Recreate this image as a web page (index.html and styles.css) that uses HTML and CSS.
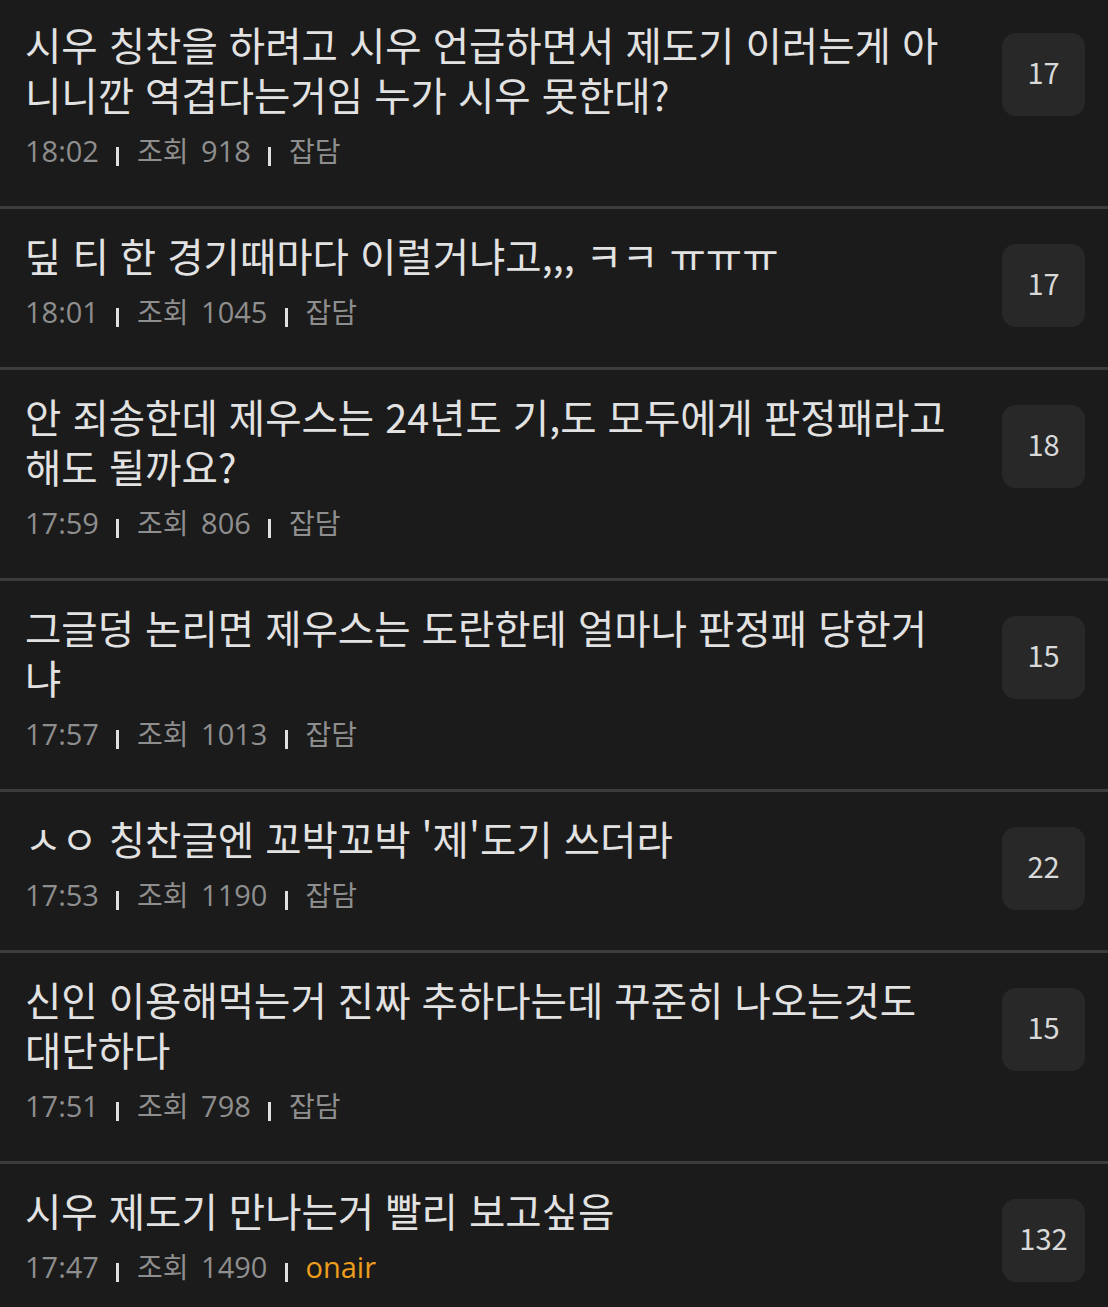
FILE: index.html
```html
<!DOCTYPE html>
<html lang="ko">
<head>
    <meta charset="UTF-8">
    <meta name="viewport" content="width=device-width, initial-scale=1.0">
    <title>잡담 게시판</title>
    <link rel="stylesheet" href="styles.css">
</head>
<body>
    <ul class="post-list">
        <li class="post">
            <div class="post-body">
                <h2 class="post-title">시우 칭찬을 하려고 시우 언급하면서 제도기 이러는게 아니니깐 역겹다는거임 누가 시우 못한대?</h2>
                <div class="post-meta">18:02 <span class="bar"></span> <span class="label">조회</span> 918 <span class="bar"></span> <span class="label">잡담</span></div>
            </div>
            <div class="reply-count">17</div>
        </li>
        <li class="post">
            <div class="post-body">
                <h2 class="post-title">딮 티 한 경기때마다 이럴거냐고,,, ㅋㅋ ㅠㅠㅠ</h2>
                <div class="post-meta">18:01 <span class="bar"></span> <span class="label">조회</span> 1045 <span class="bar"></span> <span class="label">잡담</span></div>
            </div>
            <div class="reply-count">17</div>
        </li>
        <li class="post">
            <div class="post-body">
                <h2 class="post-title">안 죄송한데 제우스는 24년도 기,도 모두에게 판정패라고 해도 될까요?</h2>
                <div class="post-meta">17:59 <span class="bar"></span> <span class="label">조회</span> 806 <span class="bar"></span> <span class="label">잡담</span></div>
            </div>
            <div class="reply-count">18</div>
        </li>
        <li class="post">
            <div class="post-body">
                <h2 class="post-title">그글덩 논리면 제우스는 도란한테 얼마나 판정패 당한거냐</h2>
                <div class="post-meta">17:57 <span class="bar"></span> <span class="label">조회</span> 1013 <span class="bar"></span> <span class="label">잡담</span></div>
            </div>
            <div class="reply-count">15</div>
        </li>
        <li class="post">
            <div class="post-body">
                <h2 class="post-title">ㅅㅇ 칭찬글엔 꼬박꼬박 '제'도기 쓰더라</h2>
                <div class="post-meta">17:53 <span class="bar"></span> <span class="label">조회</span> 1190 <span class="bar"></span> <span class="label">잡담</span></div>
            </div>
            <div class="reply-count">22</div>
        </li>
        <li class="post">
            <div class="post-body">
                <h2 class="post-title">신인 이용해먹는거 진짜 추하다는데 꾸준히 나오는것도 대단하다</h2>
                <div class="post-meta">17:51 <span class="bar"></span> <span class="label">조회</span> 798 <span class="bar"></span> <span class="label">잡담</span></div>
            </div>
            <div class="reply-count">15</div>
        </li>
        <li class="post">
            <div class="post-body">
                <h2 class="post-title">시우 제도기 만나는거 빨리 보고싶음</h2>
                <div class="post-meta">17:47 <span class="bar"></span> <span class="label">조회</span> 1490 <span class="bar"></span> <span class="onair">onair</span></div>
            </div>
            <div class="reply-count">132</div>
        </li>
    </ul>
</body>
</html>
```

FILE: styles.css
```css
body {
    margin: 0;
    background-color: #1b1b1b;
    font-family: "Noto Sans CJK KR", "Noto Sans", sans-serif;
    overflow: hidden;
}
.post-list {
    list-style: none;
    margin: -2px 0 0;
    padding: 0;
}
.post {
    display: flex;
    align-items: flex-start;
    padding: 21px 23px 35px 25px;
    border-bottom: 3px solid #3c3c3c;
}
.post-body {
    flex: 1;
    min-width: 0;
    padding-right: 51px;
}
.post-title {
    margin: 0;
    font-size: 39.5px;
    font-weight: 400;
    line-height: 50px;
    color: #e2e2e2;
}
.post-meta {
    margin-top: 12px;
    font-family: "Open Sans", "Noto Sans CJK KR", sans-serif;
    font-size: 29px;
    line-height: 40px;
    word-spacing: 5px;
    color: #8e8e8e;
}
.post-meta .label {
    font-family: "Noto Sans CJK KR", sans-serif;
    font-size: 28px;
    line-height: 1;
}
.bar {
    display: inline-block;
    width: 3px;
    height: 19px;
    margin: 0 5px;
    vertical-align: -4px;
    background-color: #e0e0e0;
}
.onair {
    color: #ec9d1c;
}
.reply-count {
    flex: none;
    box-sizing: border-box;
    width: 83px;
    height: 83px;
    margin-top: 14px;
    padding-bottom: 7px;
    border-radius: 14px;
    background-color: #282828;
    color: #d9d9d9;
    font-size: 29px;
    display: flex;
    align-items: center;
    justify-content: center;
}
```
